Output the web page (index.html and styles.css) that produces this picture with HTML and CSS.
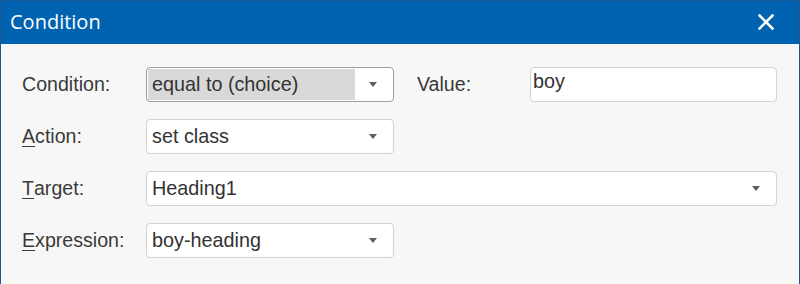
FILE: index.html
```html
<!DOCTYPE html>
<html lang="en">
<head>
    <meta charset="UTF-8">
    <link rel="stylesheet" href="styles.css">
    <title>Condition</title>
</head>
<body>
    <div class="window">
        <header class="titlebar">
            <h1>Condition</h1>
            <button class="close" type="button" aria-label="Close">
                <svg width="16" height="16" viewBox="0 0 16 16">
                    <path d="M1.5 1.5 L14.5 14.5 M14.5 1.5 L1.5 14.5" stroke="#fff" stroke-width="2.6" stroke-linecap="square"/>
                </svg>
            </button>
        </header>
        <main class="content">
            <form class="grid">
                <label class="label">Condition:</label>
                <div class="select focused">
                    <span class="value selected">equal to (choice)</span>
                    <span class="arrow"></span>
                </div>
                <label class="label value-label">Value:</label>
                <div class="textbox">boy</div>

                <label class="label"><u>A</u>ction:</label>
                <div class="select">
                    <span class="value">set class</span>
                    <span class="arrow"></span>
                </div>

                <label class="label"><u>T</u>arget:</label>
                <div class="select wide">
                    <span class="value">Heading1</span>
                    <span class="arrow"></span>
                </div>

                <label class="label"><u>E</u>xpression:</label>
                <div class="select">
                    <span class="value">boy-heading</span>
                    <span class="arrow"></span>
                </div>
            </form>
        </main>
    </div>
</body>
</html>
```

FILE: styles.css
```css
html, body {
  margin: 0;
  height: 100%;
}

body {
  font-family: "Liberation Sans", Arial, sans-serif;
  background: #f7f7f7;
}

.window {
  height: 100%;
  box-sizing: border-box;
  border-left: 1px solid #1c5894;
  border-right: 1px solid #1c5894;
  display: flex;
  flex-direction: column;
}

.titlebar {
  height: 44px;
  box-sizing: border-box;
  background: #0063b1;
  border-top: 1px solid #1c5894;
  display: flex;
  align-items: center;
  justify-content: space-between;
  padding: 0 25px 0 9px;
}

.titlebar h1 {
  margin: 0;
  font-family: "Open Sans", sans-serif;
  font-weight: normal;
  font-size: 20px;
  color: #fff;
  line-height: 1;
  padding-bottom: 2px;
}

.close {
  border: none;
  background: none;
  padding: 0;
  width: 16px;
  height: 16px;
  margin-bottom: 2px;
}

.close svg {
  display: block;
}

.content {
  flex: 1;
  padding: 23px 0 0 21px;
}

.grid {
  display: grid;
  grid-template-columns: 124px 248px 23px 113px 247px;
  grid-auto-rows: 35px;
  row-gap: 17px;
  margin: 0;
}

.label {
  grid-column: 1;
  display: flex;
  align-items: center;
  font-size: 19.6px;
  color: #3a3a3a;
}

.label u {
  text-decoration-thickness: 1px;
  text-underline-offset: 3px;
}

.value-label {
  grid-column: 4;
}

.select {
  grid-column: 2;
  display: flex;
  align-items: center;
  background: #fff;
  border: 1px solid #d3d3d3;
  border-radius: 4px;
  padding: 1px;
  box-sizing: border-box;
  font-size: 19.8px;
  color: #333;
}

.select.focused {
  border-color: #9e9e9e;
}

.select.wide {
  grid-column: 2 / 6;
}

.select .value {
  flex: 1;
  align-self: stretch;
  display: flex;
  align-items: center;
  padding-left: 4px;
}

.select .value.selected {
  background: #d9d9d9;
}

.select .arrow {
  width: 37px;
  display: flex;
  justify-content: center;
}

.select .arrow::before {
  content: "";
  border-left: 4.5px solid transparent;
  border-right: 4.5px solid transparent;
  border-top: 5px solid #5f5f5f;
  margin-left: -1px;
}

.textbox {
  grid-column: 5;
  background: #fff;
  border: 1px solid #d3d3d3;
  border-radius: 4px;
  box-sizing: border-box;
  font-size: 19.8px;
  color: #333;
  padding: 2px 0 0 2px;
  line-height: 22px;
}
```
